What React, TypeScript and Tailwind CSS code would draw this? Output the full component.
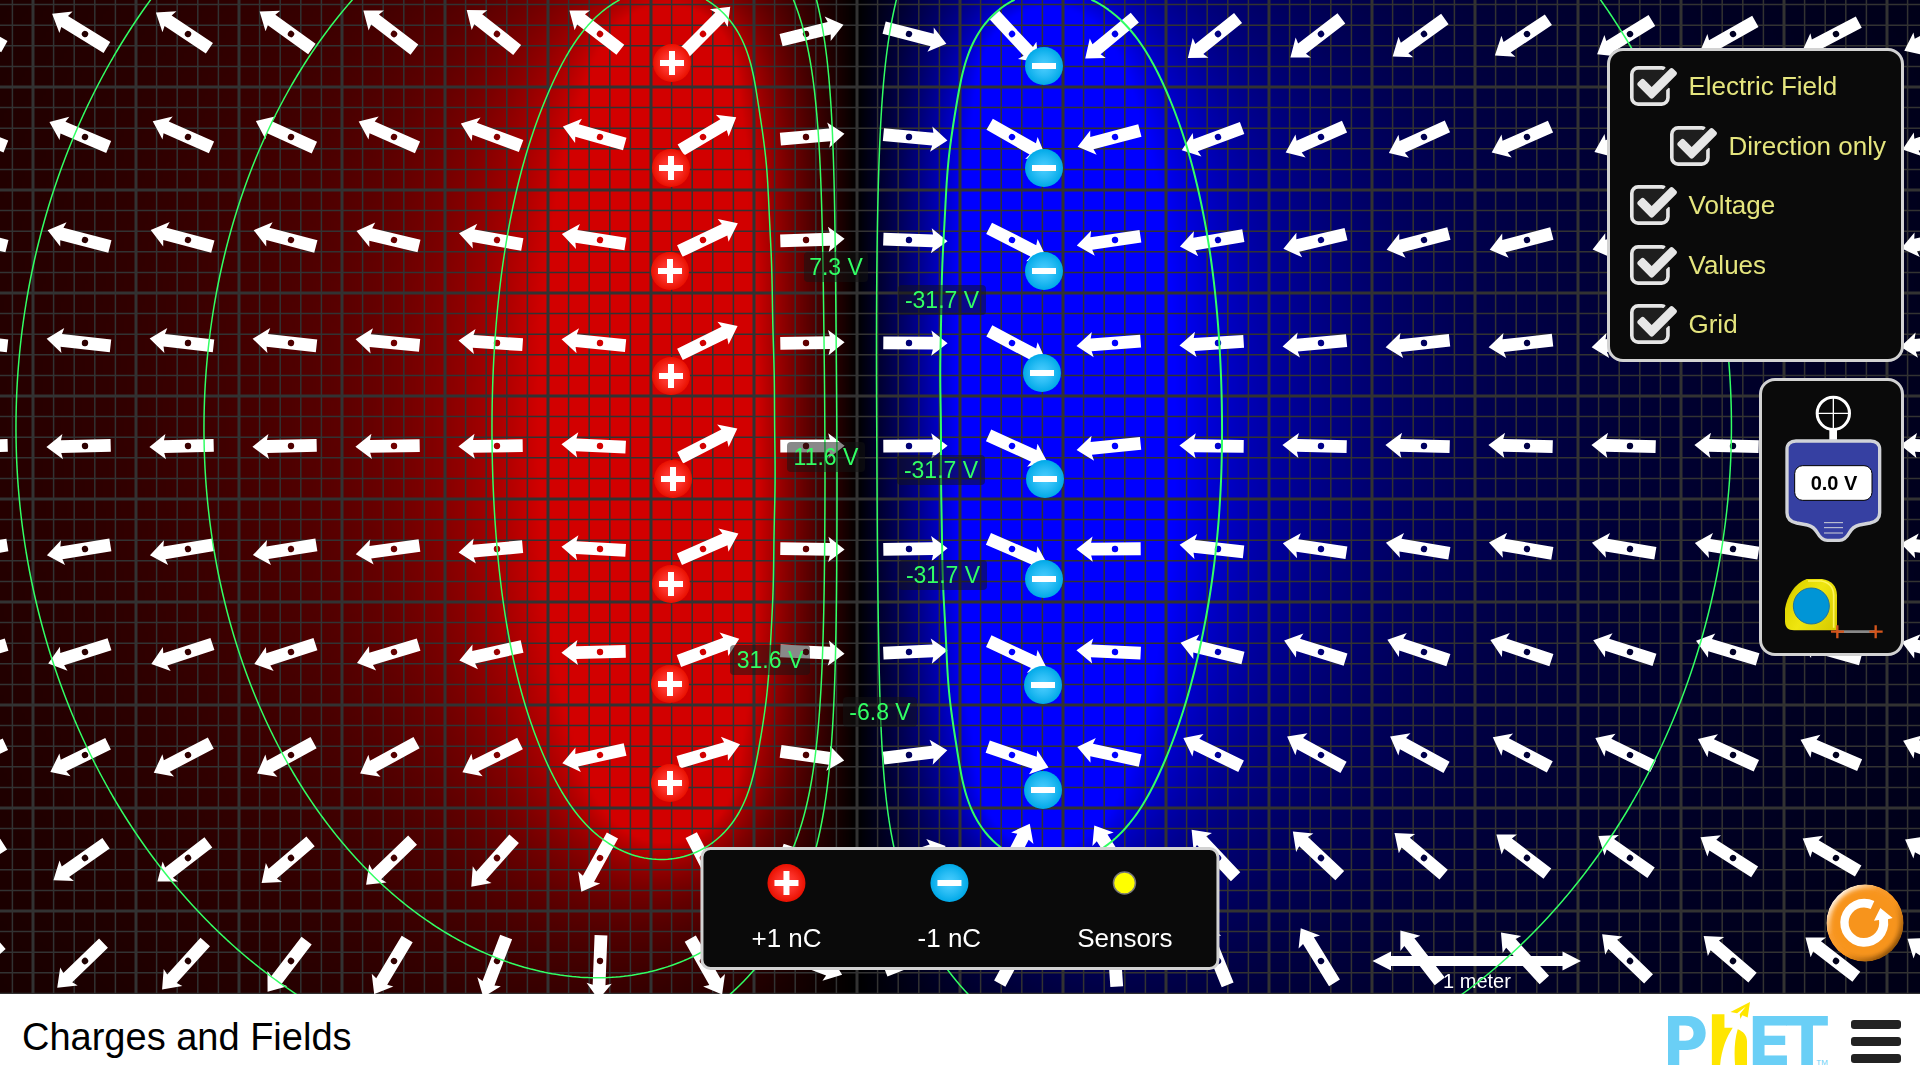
import { useLayoutEffect, useMemo, useRef, useState } from 'react';
import type { ReactNode } from 'react';

const WIDTH = 1920;
const HEIGHT = 994;
const UNIT = 103; // half a meter
const PIXELS_PER_METER = 206;
const ORIGIN_X = 960;
const ORIGIN_Y = 499;

type Charge = { x: number; y: number; q: number };

const CHARGES: Charge[] = [
  { x: 672, y: 63, q: 1 },
  { x: 671, y: 168, q: 1 },
  { x: 670, y: 271, q: 1 },
  { x: 671, y: 376, q: 1 },
  { x: 673, y: 479, q: 1 },
  { x: 671, y: 584, q: 1 },
  { x: 670, y: 684, q: 1 },
  { x: 670, y: 783, q: 1 },
  { x: 1044, y: 66, q: -1 },
  { x: 1044, y: 168, q: -1 },
  { x: 1044, y: 271, q: -1 },
  { x: 1042, y: 373, q: -1 },
  { x: 1045, y: 479, q: -1 },
  { x: 1044, y: 579, q: -1 },
  { x: 1043, y: 685, q: -1 },
  { x: 1043, y: 790, q: -1 },
];

const LABELS = [
  { text: '7.3 V', x: 836, y: 267, width: 64 },
  { text: '-31.7 V', x: 942, y: 300, width: 88 },
  { text: '11.6 V', x: 826, y: 457, width: 78 },
  { text: '-31.7 V', x: 941, y: 470, width: 88 },
  { text: '-31.7 V', x: 943, y: 575, width: 88 },
  { text: '31.6 V', x: 770, y: 660, width: 80 },
  { text: '-6.8 V', x: 880, y: 712, width: 74 },
];

// Each equipotential line passes through one of these points.
const LINE_POINTS = [
  { x: 16, y: 422, stroke: 1.5 },
  { x: 204, y: 422, stroke: 1.5 },
  { x: 492, y: 422, stroke: 1.5 },
  { x: 1222, y: 422, stroke: 2 },
  { x: 1731, y: 400, stroke: 1.5 },
];

function potential(x: number, y: number) {
  let v = 0;
  for (const c of CHARGES) {
    const r = Math.max(Math.hypot(x - c.x, y - c.y), 1) / PIXELS_PER_METER;
    v += (9 * c.q) / r;
  }
  return v;
}

function fieldAngle(x: number, y: number) {
  let ex = 0;
  let ey = 0;
  for (const c of CHARGES) {
    const dx = x - c.x;
    const dy = y - c.y;
    const r3 = Math.pow(Math.max(Math.hypot(dx, dy), 1), 3);
    ex += (c.q * dx) / r3;
    ey += (c.q * dy) / r3;
  }
  return (Math.atan2(ey, ex) * 180) / Math.PI;
}

function contourPaths(levels: number[]) {
  const step = 4;
  const cols = Math.ceil(WIDTH / step) + 2;
  const rows = Math.ceil(HEIGHT / step) + 2;
  const v = new Float64Array(cols * rows);
  for (let j = 0; j < rows; j++) {
    for (let i = 0; i < cols; i++) v[j * cols + i] = potential(i * step, j * step);
  }
  return levels.map((level) => {
    const parts: string[] = [];
    for (let j = 0; j < rows - 1; j++) {
      for (let i = 0; i < cols - 1; i++) {
        const a = v[j * cols + i] - level;
        const b = v[j * cols + i + 1] - level;
        const c = v[(j + 1) * cols + i + 1] - level;
        const d = v[(j + 1) * cols + i] - level;
        const points: string[] = [];
        const add = (px: number, py: number) =>
          points.push(`${(px * step).toFixed(2)} ${(py * step).toFixed(2)}`);
        if (a > 0 !== b > 0) add(i + a / (a - b), j);
        if (b > 0 !== c > 0) add(i + 1, j + b / (b - c));
        if (d > 0 !== c > 0) add(i + d / (d - c), j + 1);
        if (a > 0 !== d > 0) add(i, j + a / (a - d));
        for (let k = 0; k + 1 < points.length; k += 2) parts.push(`M${points[k]}L${points[k + 1]}`);
      }
    }
    return parts.join('');
  });
}

function gridPath(spacing: number) {
  let d = '';
  for (let k = -Math.ceil(ORIGIN_X / spacing); k * spacing + ORIGIN_X <= WIDTH; k++) {
    d += `M${(ORIGIN_X + k * spacing).toFixed(1)} 0V${HEIGHT}`;
  }
  for (let k = -Math.ceil(ORIGIN_Y / spacing); k * spacing + ORIGIN_Y <= HEIGHT; k++) {
    d += `M0 ${(ORIGIN_Y + k * spacing).toFixed(1)}H${WIDTH}`;
  }
  return d;
}

function VoltageMap() {
  const ref = useRef<HTMLCanvasElement>(null);
  useLayoutEffect(() => {
    const canvas = ref.current;
    const ctx = canvas?.getContext('2d');
    if (!canvas || !ctx) return;
    const { width, height } = canvas;
    const image = ctx.createImageData(width, height);
    for (let j = 0; j < height; j++) {
      for (let i = 0; i < width; i++) {
        const v = potential(((i + 0.5) * WIDTH) / width, ((j + 0.5) * HEIGHT) / height);
        const t = Math.min(Math.abs(v) / 40, 1);
        const k = (j * width + i) * 4;
        if (v > 0) image.data[k] = 210 * t;
        else image.data[k + 2] = 255 * t;
        image.data[k + 3] = 255;
      }
    }
    ctx.putImageData(image, 0, 0);
  }, []);
  return <canvas ref={ref} width={640} height={331} className="absolute inset-0 h-full w-full object-cover" />;
}

function ChargeShape({ positive }: { positive: boolean }) {
  return (
    <>
      <circle r="19" fill={positive ? 'url(#positive)' : 'url(#negative)'} />
      <rect x="-12" y="-3" width="24" height="6" fill="#fff" />
      {positive && <rect x="-3" y="-12" width="6" height="24" fill="#fff" />}
    </>
  );
}

type Options = { field: boolean; direction: boolean; voltage: boolean; values: boolean; grid: boolean };

function Scene({ options }: { options: Options }) {
  const lines = useMemo(() => contourPaths(LINE_POINTS.map((p) => potential(p.x, p.y))), []);
  const minor = useMemo(() => gridPath(UNIT / 5), []);
  const major = useMemo(() => gridPath(UNIT), []);
  const arrows = useMemo(() => {
    const list: { x: number; y: number; angle: number }[] = [];
    for (let j = 0; j < 10; j++) {
      for (let i = 0; i < 20; i++) {
        const x = i * UNIT - 18;
        const y = j * UNIT + 34;
        list.push({ x, y, angle: fieldAngle(x, y) });
      }
    }
    return list;
  }, []);

  return (
    <svg
      viewBox="0 0 1920 994"
      preserveAspectRatio="xMidYMid slice"
      className="absolute inset-0 h-full w-full font-['Liberation_Sans',Arial,sans-serif]"
      role="img"
      aria-label="Electric field of two rows of charges"
    >
      <defs>
        <radialGradient id="positive">
          <stop offset="0" stopColor="#ff4343" />
          <stop offset="0.5" stopColor="#fb3027" />
          <stop offset="1" stopColor="#e91000" />
        </radialGradient>
        <radialGradient id="negative">
          <stop offset="0" stopColor="#4fcfff" />
          <stop offset="0.5" stopColor="#2cbef5" />
          <stop offset="1" stopColor="#00a9e8" />
        </radialGradient>
      </defs>
      {options.grid && (
        <g fill="none" stroke="#323232">
          <path d={minor} strokeWidth="1.5" />
          <path d={major} strokeWidth="3" />
        </g>
      )}
      {options.field && (
        <g fill="#fff" fillRule="evenodd">
          {arrows.map((a) => (
            <path
              key={`${a.x},${a.y}`}
              transform={`translate(${a.x} ${a.y}) rotate(${a.angle.toFixed(2)})`}
              d="M-25.7-6.4H23.9L22.3-12.6L38.6 0L22.3 12.6L23.9 6.4H-25.7ZM3.2 0A3.2 3.2 0 1 0-3.2 0A3.2 3.2 0 1 0 3.2 0Z"
            />
          ))}
        </g>
      )}
      {options.grid && (
        <g fill="#fff">
          <path d="M1372.5 961L1391 951.5V956H1562.5V951.5L1581 961L1562.5 970.5V966H1391V970.5Z" />
          <text x="1477" y="988" fontSize="20" textAnchor="middle">
            1 meter
          </text>
        </g>
      )}
      <g fill="none" stroke="#32ff64" strokeLinecap="round">
        {lines.map((d, i) => (
          <path key={i} d={d} strokeWidth={LINE_POINTS[i].stroke} />
        ))}
      </g>
      {CHARGES.map((c) => (
        <g key={`${c.x},${c.y}`} transform={`translate(${c.x} ${c.y})`}>
          <ChargeShape positive={c.q > 0} />
        </g>
      ))}
      {options.values &&
        LABELS.map((l) => (
          <g key={`${l.x},${l.y}`}>
            <rect x={l.x - l.width / 2} y={l.y - 15} width={l.width} height="30" rx="4" fill="#141414" fillOpacity="0.5" />
            <text x={l.x} y={l.y + 8} fontSize="23" textAnchor="middle" fill="#32ff64">
              {l.text}
            </text>
          </g>
        ))}
    </svg>
  );
}

function Panel({ className, children }: { className: string; children: ReactNode }) {
  return <div className={`absolute border-[3px] border-[#d2d2d2] bg-[#0a0a0a] ${className}`}>{children}</div>;
}

function CheckRow(props: { label: string; checked: boolean; onChange: () => void; indent?: boolean }) {
  const { label, checked, onChange, indent } = props;
  return (
    <label
      className={`relative flex h-[42px] cursor-pointer items-center gap-[11px] text-[26px] leading-[30px] text-[#e5e57e] ${indent ? 'ml-10' : ''}`}
    >
      <input type="checkbox" checked={checked} onChange={onChange} className="absolute h-10 w-10 cursor-pointer appearance-none" />
      <svg viewBox="64 128 1664 1408" className="pointer-events-none relative h-10 w-[47px] shrink-0" aria-hidden="true">
        <rect x="100" y="160" width="1320" height="1340" rx="200" fill="#1e1e1e" />
        {checked ? (
          <path
            fill="#e6e6e6"
            d="M1472 930v318q0 119-84.500 203.500t-203.500 84.500h-832q-119 0-203.500-84.500t-84.500-203.500v-832q0-119 84.500-203.500t203.500-84.500h832q63 0 117 25 15 7 18 23 3 17-9 29l-49 49q-10 10-23 10-3 0-9-2-23-6-45-6h-832q-66 0-113 47t-47 113v832q0 66 47 113t113 47h832q66 0 113-47t47-113v-254q0-13 9-22l64-64q10-10 23-10 6 0 12 3 20 8 20 29zm231-489l-814 814q-24 24-57 24t-57-24l-430-430q-24-24-24-57t24-57l110-110q24-24 57-24t57 24l263 263 647-647q24-24 57-24t57 24l110 110q24 24 24 57t-24 57z"
          />
        ) : (
          <rect x="128" y="192" width="1280" height="1280" rx="224" fill="none" stroke="#e6e6e6" strokeWidth="128" />
        )}
      </svg>
      <span className="whitespace-nowrap">{label}</span>
    </label>
  );
}

function Voltmeter() {
  return (
    <svg viewBox="135 105 291 444" className="h-[148px] w-[97px]" aria-hidden="true">
      <rect x="268" y="205" width="23" height="40" fill="#fff" />
      <circle cx="280" cy="160" r="48.500" fill="#0a0a0a" stroke="#fff" strokeWidth="9" />
      <path d="M280 113V207M233 160H327" stroke="#fff" strokeWidth="4" />
      <path
        d="M168 243H392C409 243 419 253 419 268V458C419 474 408 485 390 489L358 495C344 498 334 507 327 520C319 535 312 541 298 541H262C248 541 241 535 233 520C226 507 216 498 202 495L170 489C152 485 141 474 141 458V268C141 253 151 243 168 243Z"
        fill="#3640a2"
        stroke="#d1d3d8"
        strokeWidth="10"
      />
      <rect x="164" y="317" width="232" height="104" rx="24" fill="#fff" stroke="#000" strokeWidth="3" />
      <path d="M252 488H309M252 503H309M252 519H309" stroke="#d1d3d8" strokeWidth="3" />
      <text x="282" y="391" textAnchor="middle" fontSize="60" fontWeight="bold" fill="#000">
        0.0 V
      </text>
    </svg>
  );
}

function TapeMeasure() {
  return (
    <svg viewBox="135 655 297 183" className="h-[61px] w-[99px]" aria-hidden="true">
      <defs>
        <linearGradient id="tape" x1="0" y1="0.2" x2="1" y2="0.8">
          <stop offset="0" stopColor="#a89c00" />
          <stop offset="0.150" stopColor="#e0d600" />
          <stop offset="0.500" stopColor="#efe610" />
          <stop offset="1" stopColor="#d8cc00" />
        </linearGradient>
      </defs>
      <path
        d="M200 658H246C274 662 290 678 291 706V812H162C143 812 135 802 135 785V748C140 712 164 670 200 658Z"
        fill="url(#tape)"
      />
      <path d="M204 664H243C268 668 280 682 281 706V804" fill="none" stroke="#fff45a" strokeWidth="5" />
      <circle cx="214" cy="739" r="54" fill="#0095d6" stroke="#23739a" strokeWidth="3" />
      <path d="M292 816H407" stroke="#888" strokeWidth="8" />
      <path d="M273 816H312M292 797V836M388 816H428M407 797V836" stroke="#d4551c" strokeWidth="7" />
    </svg>
  );
}

function ResetIcon() {
  return (
    <svg viewBox="18 27 234 234" className="h-[78px] w-[78px]" aria-hidden="true">
      <defs>
        <linearGradient id="shine" x1="0.150" y1="0.150" x2="0.850" y2="0.850">
          <stop offset="0" stopColor="#fff3e4" />
          <stop offset="0.300" stopColor="#f99d33" />
          <stop offset="0.600" stopColor="#f7941e" />
          <stop offset="1" stopColor="#8f520a" />
        </linearGradient>
        <filter id="soft" x="-10%" y="-10%" width="120%" height="120%">
          <feGaussianBlur stdDeviation="7" />
        </filter>
        <clipPath id="disc">
          <circle cx="135" cy="144" r="116" />
        </clipPath>
      </defs>
      <g clipPath="url(#disc)">
        <circle cx="135" cy="144" r="116" fill="url(#shine)" />
        <circle cx="135" cy="144" r="103" fill="#f7941e" filter="url(#soft)" />
      </g>
      <path d="M163 78A72 72 0 1 0 204 133L218 129L181 99L162 137L177 135A46 46 0 1 1 152 102Z" fill="#fff" />
    </svg>
  );
}

function Logo() {
  return (
    <svg viewBox="84 36 482 190" className="h-[63px] w-[160px]" role="img" aria-label="PhET">
      <g fill="#6acff6" fontFamily="Inter, sans-serif" fontWeight="800" fontSize="204">
        <text x="71" y="226">
          P
        </text>
        <text x="328" y="226">
          E
        </text>
        <text x="434" y="226">
          T
        </text>
      </g>
      <text x="531" y="226" fill="#6acff6" fontSize="24">
        TM
      </text>
      <path
        d="M216 73H254V114H279C260 142 245 180 241 226H216ZM294 118C310 124 322 136 322 156V226H286C283 190 284 150 294 118ZM272 66L331 36L324 83L308 76L302 87L300 73L318 50L292 70Z"
        fill="#ffe600"
      />
    </svg>
  );
}

function SourceItem({ label, children }: { label: string; children: ReactNode }) {
  return (
    <button type="button" className="flex cursor-pointer flex-col items-center gap-5">
      <svg viewBox="-20 -20 40 40" className="h-10 w-10" aria-hidden="true">
        {children}
      </svg>
      <span className="text-[26px] leading-[30px] text-white">{label}</span>
    </button>
  );
}

export default function App() {
  const [options, setOptions] = useState<Options>({
    field: true,
    direction: true,
    voltage: true,
    values: true,
    grid: true,
  });
  const toggle = (key: keyof Options) => () => setOptions((o) => ({ ...o, [key]: !o[key] }));

  return (
    <div className="flex h-screen flex-col overflow-hidden bg-white font-['Liberation_Sans',Arial,sans-serif]">
      <main className="relative flex-1 overflow-hidden bg-black">
        {options.voltage && <VoltageMap />}
        <Scene options={options} />

        <Panel className="top-12 right-4 flex min-h-[314px] flex-col justify-between rounded-2xl py-[14px] pr-[15px] pl-5">
          <CheckRow label="Electric Field" checked={options.field} onChange={toggle('field')} />
          <CheckRow label="Direction only" checked={options.direction} onChange={toggle('direction')} indent />
          <CheckRow label="Voltage" checked={options.voltage} onChange={toggle('voltage')} />
          <CheckRow label="Values" checked={options.values} onChange={toggle('values')} />
          <CheckRow label="Grid" checked={options.grid} onChange={toggle('grid')} />
        </Panel>

        <Panel className="top-[378px] right-4 flex flex-col gap-[35px] rounded-2xl py-[14px] pr-[17px] pl-[23px]">
          <button type="button" aria-label="Voltage sensor" className="cursor-pointer">
            <Voltmeter />
          </button>
          <button type="button" aria-label="Measuring tape" className="cursor-pointer">
            <TapeMeasure />
          </button>
        </Panel>

        <Panel className="bottom-6 left-1/2 flex -translate-x-1/2 justify-center gap-24 rounded-[10px] pt-[13px] pr-11 pb-[14px] pl-12">
          <SourceItem label="+1 nC">
            <ChargeShape positive />
          </SourceItem>
          <SourceItem label="-1 nC">
            <ChargeShape positive={false} />
          </SourceItem>
          <SourceItem label="Sensors">
            <circle r="11" fill="#ff0" stroke="#777" strokeWidth="1.5" />
          </SourceItem>
        </Panel>

        <button type="button" aria-label="Reset all" className="absolute right-4 bottom-8 cursor-pointer rounded-full">
          <ResetIcon />
        </button>
      </main>

      <footer className="flex h-[86px] shrink-0 items-center justify-between pr-[19px] pl-[22px]">
        <h1 className="text-[38px] leading-[44px] text-black">Charges and Fields</h1>
        <div className="flex items-center gap-[23px]">
          <button type="button" className="-mt-2 cursor-pointer">
            <Logo />
          </button>
          <button type="button" aria-label="Menu" className="flex w-[50px] cursor-pointer flex-col gap-2 pt-2">
            <span className="h-[9px] rounded-[3px] bg-[#222]" />
            <span className="h-[9px] rounded-[3px] bg-[#222]" />
            <span className="h-[9px] rounded-[3px] bg-[#222]" />
          </button>
        </div>
      </footer>
    </div>
  );
}
